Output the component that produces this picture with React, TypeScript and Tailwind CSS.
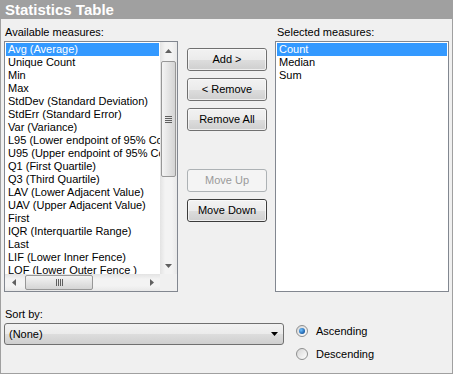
import React from 'react';

const available = [
  'Avg (Average)',
  'Unique Count',
  'Min',
  'Max',
  'StdDev (Standard Deviation)',
  'StdErr (Standard Error)',
  'Var (Variance)',
  'L95 (Lower endpoint of 95% Confidence Interval)',
  'U95 (Upper endpoint of 95% Confidence Interval)',
  'Q1 (First Quartile)',
  'Q3 (Third Quartile)',
  'LAV (Lower Adjacent Value)',
  'UAV (Upper Adjacent Value)',
  'First',
  'IQR (Interquartile Range)',
  'Last',
  'LIF (Lower Inner Fence)',
  'LOF (Lower Outer Fence )',
  'UIF (Upper Inner Fence)',
];

const selected = ['Count', 'Median', 'Sum'];

function Item({ text, active }: { text: string; active?: boolean }) {
  return (
    <div
      className={`h-[13px] leading-[13px] pl-[2px] whitespace-nowrap ${
        active ? 'bg-[#3399ff] text-white' : 'text-black'
      }`}
    >
      {text}
    </div>
  );
}

function Arrow({ dir }: { dir: 'up' | 'down' | 'left' | 'right' }) {
  const pts = {
    up: '0,4 3.5,0 7,4',
    down: '0,0 3.5,4 7,0',
    left: '4,0 0,3.5 4,7',
    right: '0,0 4,3.5 0,7',
  }[dir];
  const vertical = dir === 'up' || dir === 'down';
  return (
    <svg width={vertical ? 7 : 4} height={vertical ? 4 : 7} viewBox={vertical ? '0 0 7 4' : '0 0 4 7'}>
      <polygon points={pts} fill="#606060" />
    </svg>
  );
}

function Button({ label, disabled, focused }: { label: string; disabled?: boolean; focused?: boolean }) {
  if (disabled) {
    return (
      <div className="h-[23px] flex items-center justify-center rounded-[3px] border border-[#adb2b5] bg-[#f4f4f4] text-[#9a9a9a]">
        {label}
      </div>
    );
  }
  return (
    <div
      className={`h-[23px] flex items-center justify-center rounded-[3px] border text-black bg-[linear-gradient(to_bottom,#f2f2f2_0%,#ebebeb_50%,#dddddd_51%,#cfcfcf_100%)] ${
        focused ? 'border-[#3c3c3c]' : 'border-[#707070]'
      }`}
    >
      <div className="w-full h-full flex items-center justify-center rounded-[2px] border border-[#fcfcfc]/70">
        {label}
      </div>
    </div>
  );
}

function Radio({ label, checked }: { label: string; checked?: boolean }) {
  return (
    <div className="h-[20px] flex items-center">
      <div className="w-[12px] h-[12px] rounded-full border border-[#8e8f8f] bg-[linear-gradient(to_bottom_right,#d5d5d5,#ffffff)] flex items-center justify-center">
        {checked && (
          <div className="w-[6px] h-[6px] rounded-full bg-[radial-gradient(circle_at_35%_35%,#6fc1ff,#1a5ea8_70%,#0c3b73)]" />
        )}
      </div>
      <span className="ml-[8px] text-black">{label}</span>
    </div>
  );
}

export default function App() {
  return (
    <div className="w-[453px] h-[374px] bg-[#f0f0f0] border-x border-b border-[#a0a0a0] flex flex-col font-['Liberation_Sans',Arial,sans-serif] text-[11px] overflow-hidden">
      {/* Title */}
      <div className="h-[19px] bg-[#a0a0a0] text-white font-bold text-[15px] leading-[19px] pl-[4px] shrink-0">
        Statistics Table
      </div>

      <div className="flex-1 pl-[3px] pr-[2px] pt-[6px]">
        <div className="flex">
          {/* Available measures */}
          <div className="w-[174px]">
            <div className="h-[15px] leading-[15px] pl-[1px] text-black">Available measures:</div>
            <div className="mt-[1px] h-[251px] border border-[#828790] bg-white flex flex-col">
              <div className="flex h-[232px]">
                <div className="flex-1 overflow-hidden pt-[1px] px-[1px]">
                  {available.map((m, i) => (
                    <Item key={m} text={m} active={i === 0} />
                  ))}
                </div>
                {/* vertical scrollbar */}
                <div className="w-[17px] bg-[linear-gradient(to_right,#e3e3e3,#f3f3f3_30%,#f3f3f3_70%,#e8e8e8)] flex flex-col">
                  <div className="h-[17px] flex items-center justify-center">
                    <Arrow dir="up" />
                  </div>
                  <div className="flex-1 px-[1px] pt-[2px]">
                    <div className="h-[116px] rounded-[2px] border border-[#979797] bg-[linear-gradient(to_right,#f4f4f4,#e4e4e4_50%,#d4d4d4)] flex items-center justify-center">
                      <div className="flex flex-col gap-[1px]">
                        <div className="w-[7px] h-[1px] bg-[#5f5f5f]" />
                        <div className="w-[7px] h-[1px] bg-[#5f5f5f]" />
                        <div className="w-[7px] h-[1px] bg-[#5f5f5f]" />
                        <div className="w-[7px] h-[1px] bg-[#5f5f5f]" />
                      </div>
                    </div>
                  </div>
                  <div className="h-[17px] flex items-center justify-center">
                    <Arrow dir="down" />
                  </div>
                </div>
              </div>
              <div className="flex h-[17px]">
                {/* horizontal scrollbar */}
                <div className="flex-1 flex bg-[linear-gradient(to_bottom,#e3e3e3,#f3f3f3_30%,#f3f3f3_70%,#e8e8e8)]">
                  <div className="w-[17px] flex items-center justify-center">
                    <Arrow dir="left" />
                  </div>
                  <div className="flex-1 py-[1px] pl-[3px]">
                    <div className="w-[68px] h-full rounded-[2px] border border-[#979797] bg-[linear-gradient(to_bottom,#f4f4f4,#e4e4e4_50%,#d4d4d4)] flex items-center justify-center">
                      <div className="flex gap-[1px]">
                        <div className="w-[1px] h-[7px] bg-[#5f5f5f]" />
                        <div className="w-[1px] h-[7px] bg-[#5f5f5f]" />
                        <div className="w-[1px] h-[7px] bg-[#5f5f5f]" />
                        <div className="w-[1px] h-[7px] bg-[#5f5f5f]" />
                      </div>
                    </div>
                  </div>
                  <div className="w-[17px] flex items-center justify-center">
                    <Arrow dir="right" />
                  </div>
                </div>
                <div className="w-[17px] bg-[#f0f0f0]" />
              </div>
            </div>
          </div>

          {/* Buttons */}
          <div className="ml-[9px] w-[80px] pt-[23px] flex flex-col">
            <Button label="Add >" />
            <div className="mt-[7px]">
              <Button label="< Remove" />
            </div>
            <div className="mt-[7px]">
              <Button label="Remove All" />
            </div>
            <div className="mt-[38px]">
              <Button label="Move Up" disabled />
            </div>
            <div className="mt-[7px]">
              <Button label="Move Down" focused />
            </div>
          </div>

          {/* Selected measures */}
          <div className="ml-[8px] w-[174px]">
            <div className="h-[15px] leading-[15px] pl-[2px] text-black">Selected measures:</div>
            <div className="mt-[1px] h-[251px] border border-[#828790] bg-white pt-[1px] px-[1px]">
              {selected.map((m, i) => (
                <Item key={m} text={m} active={i === 0} />
              ))}
            </div>
          </div>
        </div>

        {/* Sort */}
        <div className="flex mt-[15px]">
          <div className="w-[280px]">
            <div className="h-[15px] leading-[15px] pl-[1px] text-black">Sort by:</div>
            <div className="mt-[1px] h-[22px] rounded-[3px] border border-[#707070] bg-[linear-gradient(to_bottom,#f2f2f2_0%,#ebebeb_50%,#dddddd_51%,#cfcfcf_100%)] flex items-center pl-[4px] pr-[4px]">
              <span className="flex-1 text-black">(None)</span>
              <svg width="7" height="4" viewBox="0 0 7 4" className="mr-[1px]">
                <polygon points="0,0 3.5,4 7,0" fill="#000" />
              </svg>
            </div>
          </div>
          <div className="ml-[12px] pt-[14px] flex flex-col gap-[3px]">
            <Radio label="Ascending" checked />
            <Radio label="Descending" />
          </div>
        </div>
      </div>
    </div>
  );
}
